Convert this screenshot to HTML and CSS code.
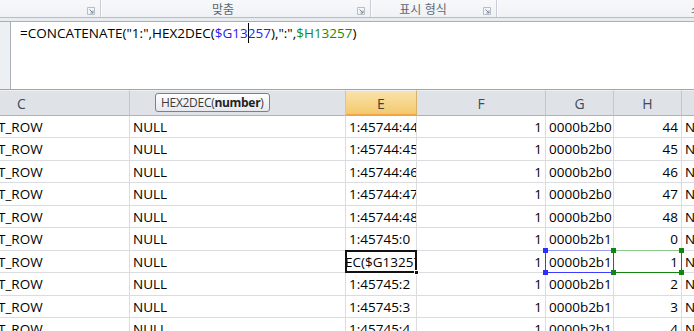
FILE: index.html
```html
<!DOCTYPE html>
<html lang="ko">
<head>
<meta charset="utf-8">
<title>Excel</title>
<link rel="stylesheet" href="styles.css">
</head>
<body>
<div class="app">
  <div class="ribbon">
    <div class="group g1">
      <span class="label"></span>
      <svg class="launcher" width="8" height="8" viewBox="0 0 8 8"><path d="M0.5 7.5V0.5H7.5V7.5Z" fill="none" stroke="#b8bec6"/><path d="M2.5 2.5L6 6M6 3.5V6H3.5" fill="none" stroke="#7d8794"/></svg>
    </div>
    <div class="group g2">
      <span class="label">맞춤</span>
      <svg class="launcher" width="8" height="8" viewBox="0 0 8 8"><path d="M0.5 7.5V0.5H7.5V7.5Z" fill="none" stroke="#b8bec6"/><path d="M2.5 2.5L6 6M6 3.5V6H3.5" fill="none" stroke="#7d8794"/></svg>
    </div>
    <div class="group g3">
      <span class="label">표시 형식</span>
      <svg class="launcher" width="8" height="8" viewBox="0 0 8 8"><path d="M0.5 7.5V0.5H7.5V7.5Z" fill="none" stroke="#b8bec6"/><path d="M2.5 2.5L6 6M6 3.5V6H3.5" fill="none" stroke="#7d8794"/></svg>
    </div>
    <div class="group g4">
      <span class="label cut">스타일</span>
    </div>
  </div>
  <div class="band"></div>
  <div class="formula-bar">
    <div class="fx-stub"><span class="chev">‹</span></div>
    <div class="formula">=CONCATENATE("1:",HEX2DEC(<span class="ref-g">$G13<span class="caret"></span>257</span>),":",<span class="ref-h">$H13257</span>)</div>
  </div>
  <div class="sheet">
    <div class="grid">
      <div class="hd">C</div>
      <div class="hd">D</div>
      <div class="hd sel">E</div>
      <div class="hd">F</div>
      <div class="hd">G</div>
      <div class="hd">H</div>
      <div class="hd">I</div>

      <div class="c cc">T_ROW</div><div class="c">NULL</div><div class="c">1:45744:44</div><div class="c num">1</div><div class="c">0000b2b0</div><div class="c num">44</div><div class="c">N</div>
      <div class="c cc">T_ROW</div><div class="c">NULL</div><div class="c">1:45744:45</div><div class="c num">1</div><div class="c">0000b2b0</div><div class="c num">45</div><div class="c">N</div>
      <div class="c cc">T_ROW</div><div class="c">NULL</div><div class="c">1:45744:46</div><div class="c num">1</div><div class="c">0000b2b0</div><div class="c num">46</div><div class="c">N</div>
      <div class="c cc">T_ROW</div><div class="c">NULL</div><div class="c">1:45744:47</div><div class="c num">1</div><div class="c">0000b2b0</div><div class="c num">47</div><div class="c">N</div>
      <div class="c cc">T_ROW</div><div class="c">NULL</div><div class="c">1:45744:48</div><div class="c num">1</div><div class="c">0000b2b0</div><div class="c num">48</div><div class="c">N</div>
      <div class="c cc">T_ROW</div><div class="c">NULL</div><div class="c">1:45745:0</div><div class="c num">1</div><div class="c">0000b2b1</div><div class="c num">0</div><div class="c">N</div>
      <div class="c cc">T_ROW</div><div class="c">NULL</div><div class="c edit"><span class="edit-text">EC($G13257</span><span class="edit-box"><span class="handle"></span></span></div><div class="c num">1</div><div class="c refcell"><span>0000b2b1</span><span class="ref-box blue"><i class="k tl"></i><i class="k tr"></i><i class="k bl"></i><i class="k br"></i></span></div><div class="c num refcell"><span>1</span><span class="ref-box green"><i class="k tl"></i><i class="k tr"></i><i class="k bl"></i><i class="k br"></i></span></div><div class="c">N</div>
      <div class="c cc">T_ROW</div><div class="c">NULL</div><div class="c">1:45745:2</div><div class="c num">1</div><div class="c">0000b2b1</div><div class="c num">2</div><div class="c">N</div>
      <div class="c cc">T_ROW</div><div class="c">NULL</div><div class="c">1:45745:3</div><div class="c num">1</div><div class="c">0000b2b1</div><div class="c num">3</div><div class="c">N</div>
      <div class="c cc">T_ROW</div><div class="c">NULL</div><div class="c">1:45745:4</div><div class="c num">1</div><div class="c">0000b2b1</div><div class="c num">4</div><div class="c">N</div>
    </div>
    <div class="tooltip">HEX2DEC(<b>number</b>)</div>
  </div>
</div>
</body>
</html>
```

FILE: styles.css
```css
* { box-sizing: border-box; }
html, body { margin: 0; padding: 0; }
body {
  width: 694px;
  height: 331px;
  overflow: hidden;
  background: #fff;
  font-family: "Open Sans", "Noto Sans CJK KR", sans-serif;
}
.app { width: 694px; height: 331px; overflow: hidden; }

/* ribbon */
.ribbon {
  height: 18px;
  display: flex;
  background: linear-gradient(#f7f8fa, #eff2f5);
  border-bottom: 1px solid #b7bdc6;
}
.group {
  display: flex;
  align-items: center;
  height: 17px;
  border-right: 1px solid #c9ced6;
  box-shadow: 1px 0 0 #fbfcfd;
  padding-right: 5px;
}
.g1 { width: 101px; justify-content: flex-end; }
.g2 { width: 270px; }
.g3 { width: 126px; }
.g4 { flex: 1; border-right: none; box-shadow: none; justify-content: flex-end; overflow: hidden; padding-right: 0; }
.label {
  flex: 1;
  text-align: center;
  font-family: "Noto Sans CJK KR", sans-serif;
  font-size: 12px;
  line-height: 17px;
  color: #5f6876;
}
.g2 .label { padding-right: 12px; }
.g3 .label { padding-right: 8px; }
.label.cut { flex: none; margin-right: -30px; }
.launcher { flex: none; margin-top: 4px; }

.band {
  height: 3px;
  background: #e8ecf1;
}

/* formula bar */
.formula-bar {
  height: 69px;
  display: flex;
  border-top: 1px solid #a9afb7;
  border-bottom: 1px solid #a0a6ae;
  background: #fff;
}
.fx-stub {
  width: 11px;
  background: #edf0f3;
  border-right: 1px solid #a9afb7;
  overflow: hidden;
}
.chev {
  display: block;
  font-size: 10px;
  line-height: 10px;
  color: #333;
  margin: 0 0 0 -3px;
}
.formula {
  padding: 1px 0 0 9px;
  font-size: 13.5px;
  line-height: 20px;
  color: #000;
  white-space: nowrap;
}
.ref-g { color: #2323f0; }
.ref-h { color: #138a13; }
.caret {
  display: inline-block;
  width: 0;
  height: 20px;
  border-left: 1px solid #000;
  vertical-align: top;
  margin-right: -1px;
}

/* sheet */
.sheet {
  position: relative;
  height: 242px;
  overflow: hidden;
}
.grid {
  display: grid;
  margin-left: -86px;
  grid-template-columns: 216px 216px 71px 129px 68px 68px 80px;
  grid-template-rows: 26px 22px 23px 22px 23px 22px 23px 22px 23px 22px 23px;
  font-size: 13.5px;
  color: #000;
}
.hd {
  background: #dfe3e8;
  border-right: 1px solid #c3c8cf;
  border-bottom: 1px solid #a9b2bd;
  border-top: 1px solid #eef0f3;
  color: #3f4a58;
  font-size: 14px;
  display: flex;
  align-items: center;
  justify-content: center;
  padding-top: 1px;
}
.hd.sel {
  background: linear-gradient(#f9e3aa, #f3c96e);
  border-right-color: #d5b36b;
  border-bottom: 2px solid #f2a541;
  color: #3f3f3f;
}
.c {
  border-right: 1px solid #dadcdf;
  border-bottom: 1px solid #dadcdf;
  display: flex;
  align-items: center;
  padding: 0 2px 0 3px;
  white-space: nowrap;
  overflow: hidden;
  line-height: 18px;
}
.c.num { justify-content: flex-end; padding-right: 3px; }
.c.cc { padding-left: 84px; }

.c.edit { position: relative; overflow: visible; padding: 0; }
.edit-text {
  display: block;
  width: 100%;
  overflow: hidden;
  white-space: nowrap;
  text-indent: -1px;
}
.edit-box {
  position: absolute;
  left: -1px; top: -1px; right: -1px; bottom: -1px;
  border: 2px solid #111;
  z-index: 2;
}
.handle {
  position: absolute;
  right: -4px; bottom: -4px;
  width: 5px; height: 5px;
  background: #111;
  border: 1px solid #fff;
}

.refcell { position: relative; overflow: visible; }
.ref-box {
  position: absolute;
  left: -1px; top: -1px; right: -1px; bottom: -1px;
  border: 1px solid;
  z-index: 2;
}
.ref-box.blue { border-color: #3d3dff; border-top-color: #9a9cf6; }
.ref-box.green { border-color: #118411; border-top-color: #8cc78c; }
.k {
  position: absolute;
  width: 5px; height: 5px;
}
.blue .k { background: #2d2dff; }
.green .k { background: #118411; }
.k.tl { left: -3px; top: -3px; }
.k.tr { right: -3px; top: -3px; }
.k.bl { left: -3px; bottom: -3px; }
.k.br { right: -3px; bottom: -3px; }

.tooltip {
  position: absolute;
  left: 155px;
  top: 3px;
  height: 19px;
  padding: 0 5px;
  border: 1px solid #7c7f84;
  border-radius: 3px;
  background: linear-gradient(#ffffff, #e6e8ee);
  font-size: 12px;
  letter-spacing: -0.3px;
  line-height: 17px;
  color: #3c3c3c;
  white-space: nowrap;
  z-index: 5;
}
.tooltip b { font-weight: 700; color: #222; }
```
